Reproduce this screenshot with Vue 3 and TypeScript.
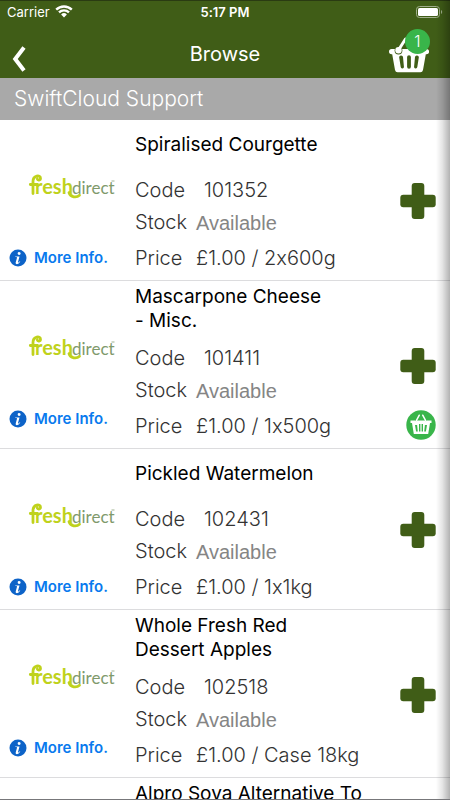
<script setup lang="ts">
interface Product {
  id: number
  name: string
  code?: string
  stock?: string
  price?: string
  inBasket?: boolean
}

const supplier = 'SwiftCloud Support'
const basketCount = 1

const products: Product[] = [
  { id: 1, name: 'Spiralised Courgette', code: '101352', stock: 'Available', price: '£1.00 / 2x600g' },
  { id: 2, name: 'Mascarpone Cheese\n- Misc.', code: '101411', stock: 'Available', price: '£1.00 / 1x500g', inBasket: true },
  { id: 3, name: 'Pickled Watermelon', code: '102431', stock: 'Available', price: '£1.00 / 1x1kg' },
  { id: 4, name: 'Whole Fresh Red\nDessert Apples', code: '102518', stock: 'Available', price: '£1.00 / Case 18kg' },
  { id: 5, name: 'Alpro Soya Alternative To' },
]
</script>

<template>
  <div class="screen">
    <header class="top">
      <div class="status">
        <div class="status-left">
          <span>Carrier</span>
          <svg class="wifi" viewBox="0 0 18 13">
            <path d="M1.2 4.6a11.2 11.2 0 0 1 15.6 0" />
            <path d="M4 7.4a7.2 7.2 0 0 1 10 0" />
            <path class="solid" d="M9 12.4 6.1 9.5a4.2 4.2 0 0 1 5.8 0z" />
          </svg>
        </div>
        <span class="time">5:17 PM</span>
        <div class="status-right">
          <svg class="battery" viewBox="0 0 27 12">
            <rect x="0.5" y="0.5" width="23" height="11" rx="3" class="shell" />
            <rect x="2" y="2" width="20" height="8" rx="1.6" class="charge" />
            <path d="M25 4c1.6.5 1.6 3.5 0 4z" class="cap" />
          </svg>
        </div>
      </div>
      <nav class="nav">
        <button class="back" type="button" aria-label="Back">
          <svg viewBox="0 0 14 26"><path d="M12 1.5 3.2 13 12 24.5" /></svg>
        </button>
        <h1>Browse</h1>
        <button class="cart" type="button" aria-label="Basket">
          <svg viewBox="0 0 40 36">
            <path class="handle" d="M30 14 22.5 2" />
            <path class="body" fill-rule="evenodd" d="M2.6 12h34.8a2.6 2.6 0 0 1 .2 5.2h-.8L34 33q-.5 2.2-2.6 2.2H8.6Q6.5 35.2 6 33L3.2 17.2h-.6a2.6 2.6 0 0 1 0-5.200zM10.200 20.500l1.500 9.500a1.600 1.600 0 0 0 3.200-.4l-.9-9.500a1.900 1.900 0 0 0-3.800.4zM18.100 20.100v9.700a1.900 1.900 0 0 0 3.800 0v-9.700a1.900 1.900 0 0 0-3.800 0zM26 20.100l-.9 9.500a1.600 1.600 0 0 0 3.200.4l1.500-9.500a1.900 1.900 0 0 0-3.800-.4z" />
            <circle class="joint" cx="9.5" cy="13.5" r="3.9" />
            <path class="handle" d="M9.5 13 16.5 2" />
            <circle class="body" cx="9.5" cy="13.2" r="3.200" />
          </svg>
          <span class="count">{{ basketCount }}</span>
        </button>
      </nav>
    </header>

    <h2 class="section">{{ supplier }}</h2>

    <ul class="list">
      <li v-for="p in products" :key="p.id" class="row" :class="{ partial: !p.code }">
        <div v-if="p.code" class="side">
          <svg class="logo" viewBox="0 0 90 30">
            <text class="fresh" x="7" y="21">resh</text>
            <path class="swash" d="M5 20.500V8.500C5 2.500 12.500 1.500 12.500 5.200c0 2.200-2.800 2.400-3.200.8M2.300 11.500h7" />
            <path class="swash" d="M41 19.500c1.500 5 7.500 5.500 10.500 2.800" />
            <text class="direct" x="44" y="21">direct</text>
            <path class="tm" d="M83.500 8h3" />
          </svg>
          <a class="more" href="#">
            <svg viewBox="0 0 18 18">
              <circle cx="9" cy="9" r="8.5" />
              <path d="M10.200 2.900a1.500 1.500 0 1 1-.1 3 1.500 1.500 0 0 1 .1-3zM6.300 7.400h4.200L9 13q-.1.500.3.500t1.500-1.200l.5.300q-1.600 2.600-3.400 2.600-1.600 0-1.200-1.700L8 8.700q.1-.6-.5-.6H6.200z" />
            </svg>
            <span>More Info.</span>
          </a>
        </div>
        <div class="info">
          <h3 class="name">{{ p.name }}</h3>
          <dl v-if="p.code" class="facts">
            <div class="fact">
              <dt>Code</dt>
              <dd class="code">{{ p.code }}</dd>
            </div>
            <div class="fact">
              <dt>Stock</dt>
              <dd class="stock">{{ p.stock }}</dd>
            </div>
            <div class="fact price">
              <dt>Price</dt>
              <dd>{{ p.price }}</dd>
            </div>
          </dl>
        </div>
        <button v-if="p.code" class="add" type="button" aria-label="Add">
          <svg viewBox="0 0 36 36">
            <rect x="11.700" y="0" width="12.600" height="36" rx="3" />
            <rect x="0.300" y="11.700" width="35.400" height="12.600" rx="3" />
          </svg>
        </button>
        <svg v-if="p.inBasket" class="in-basket" viewBox="0 0 30 30">
          <circle cx="15" cy="15" r="14.700" />
          <path class="line" d="M9.300 12.500 13.300 5.200M20.700 12.500 16.700 5.200" />
          <path class="fill" fill-rule="evenodd" d="M4.500 10.500h4.500q.8 2 2 0h8q1.200 2 2 0h4.500v2.500h-1.500L22.200 24H7.800L6 13H4.500zM9 15l1.100 6.500h1.700L11.100 15zM13 14v7.500h1.400V14zM15.600 14v7.500h1.400V14zM18.900 15l-.7 6.500h1.700L21 15z" />
        </svg>
      </li>
    </ul>
    <div class="edge"></div>
  </div>
</template>

<style>
body {
  margin: 0;
  background: #fff;
}
</style>

<style scoped>
.screen {
  position: relative;
  display: flex;
  flex-direction: column;
  height: 100vh;
  overflow: hidden;
  box-sizing: border-box;
  border-bottom: 1px solid #77777a;
  background: #fff;
  font-family: Inter, "Liberation Sans", sans-serif;
  font-variant-ligatures: no-contextual;
  color: #000;
}

button {
  padding: 0;
  border: 0;
  background: none;
  cursor: pointer;
}

svg {
  display: block;
}

h1,
h2,
h3,
ul,
dl,
dd {
  margin: 0;
  padding: 0;
  font-weight: 400;
}

.top {
  flex: none;
  background: #405d17;
  border-top: 1px solid #2a3b12;
  color: #fff;
}

.status {
  display: grid;
  grid-template-columns: 1fr auto 1fr;
  align-items: center;
  height: 21px;
  padding: 0 7px;
  font-size: 13px;
}

.status-left {
  display: flex;
  align-items: center;
  gap: 5px;
}

.status-right {
  display: flex;
  justify-content: flex-end;
}

.time {
  font-weight: 600;
}

.wifi {
  width: 18px;
  height: 13px;
  fill: none;
  stroke: #fff;
  stroke-width: 2.4;
}

.wifi .solid {
  fill: #fff;
  stroke: none;
}

.battery {
  width: 27px;
  height: 12px;
}

.shell {
  fill: none;
  stroke: #a0ae8b;
}

.charge {
  fill: #fff;
}

.cap {
  fill: #a0ae8b;
}

.nav {
  display: grid;
  grid-template-columns: 1fr auto 1fr;
  align-items: center;
  height: 56px;
  padding: 0 12px;
}

.nav h1 {
  padding-top: 8px;
  font-size: 20px;
  line-height: 24px;
}

.back {
  justify-self: start;
  margin-top: 18px;
}

.back svg {
  width: 14px;
  height: 26px;
  fill: none;
  stroke: #fff;
  stroke-width: 4;
}

.cart {
  position: relative;
  justify-self: end;
  margin: 10px 9px 0 0;
}

.cart svg {
  width: 40px;
  height: 36px;
}

.handle {
  fill: none;
  stroke: #fff;
  stroke-width: 3;
  stroke-linecap: round;
}

.body {
  fill: #fff;
}

.joint {
  fill: #405d17;
}

.count {
  position: absolute;
  top: -8px;
  right: -1px;
  width: 25px;
  border-radius: 50%;
  background: #39b54a;
  color: #fff;
  font-family: Inter, sans-serif;
  font-size: 16px;
  font-weight: 300;
  line-height: 25px;
}

.section {
  flex: none;
  padding: 0 14px;
  background: #a9a9a9;
  color: #fff;
  font-size: 21px;
  font-weight: 300;
  line-height: 42px;
}

.list {
  flex: 1;
  min-height: 0;
  overflow: hidden;
  list-style: none;
}

.row {
  position: relative;
  display: grid;
  grid-template-columns: 135px 1fr 50px;
  border-bottom: 1px solid #dcdcde;
}

.side {
  grid-column: 1;
}

.logo {
  width: 90px;
  height: 30px;
  margin: 53px 0 0 28px;
}

.fresh {
  fill: #bfd21c;
  font-family: Lato, "Open Sans", sans-serif;
  font-size: 20px;
  font-weight: 700;
}

.direct {
  fill: #7f9a6c;
  font-family: Lato, "Open Sans", sans-serif;
  font-size: 17px;
  font-weight: 400;
}

.swash {
  fill: none;
  stroke: #bfd21c;
  stroke-width: 2.8;
  stroke-linecap: round;
}

.tm {
  stroke: #9fb28f;
  stroke-width: 1;
}

.more {
  display: flex;
  align-items: center;
  gap: 7px;
  margin: 46px 0 0 9px;
  color: #087aee;
  font-size: 15px;
  font-weight: 600;
  line-height: 18px;
  text-decoration: none;
}

.more svg {
  width: 18px;
  height: 18px;
}

.more circle {
  fill: #0d63c8;
}

.more path {
  fill: #fff;
}

.info {
  grid-column: 2;
}

.name {
  display: flex;
  align-items: center;
  box-sizing: border-box;
  min-height: 48px;
  padding: 4px 0 3px;
  font-size: 19px;
  line-height: 24px;
  white-space: pre;
}

.partial .name {
  align-items: flex-start;
}

.facts {
  padding: 6px 0 2px;
}

.fact {
  display: grid;
  grid-template-columns: 61px 1fr;
  align-items: center;
  height: 32px;
  color: #333;
  font-size: 20px;
  font-weight: 300;
  line-height: 24px;
  white-space: nowrap;
}

.fact dd {
  font-weight: 300;
}

.price {
  height: 40px;
}

.fact .code {
  padding-left: 8px;
}

.fact .stock {
  padding-top: 2px;
  color: #858585;
  font-family: "Liberation Sans", Arial, sans-serif;
}

.add {
  grid-column: 3;
  align-self: center;
  justify-self: start;
  padding-top: 2px;
}

.add svg {
  width: 36px;
  height: 36px;
  fill: #405d17;
}

.in-basket {
  position: absolute;
  right: 14px;
  bottom: 8px;
  width: 30px;
  height: 30px;
}

.in-basket circle {
  fill: #39b54a;
}

.in-basket .line {
  stroke: #fff;
  stroke-width: 1.5;
  stroke-linecap: round;
}

.in-basket .fill {
  fill: #fff;
}

.edge {
  position: absolute;
  top: 0;
  right: 0;
  bottom: 0;
  width: 14px;
  background: linear-gradient(to right, rgba(0, 0, 0, 0), rgba(0, 0, 0, 0.1) 45%, rgba(0, 0, 0, 0.3));
  pointer-events: none;
}
</style>
